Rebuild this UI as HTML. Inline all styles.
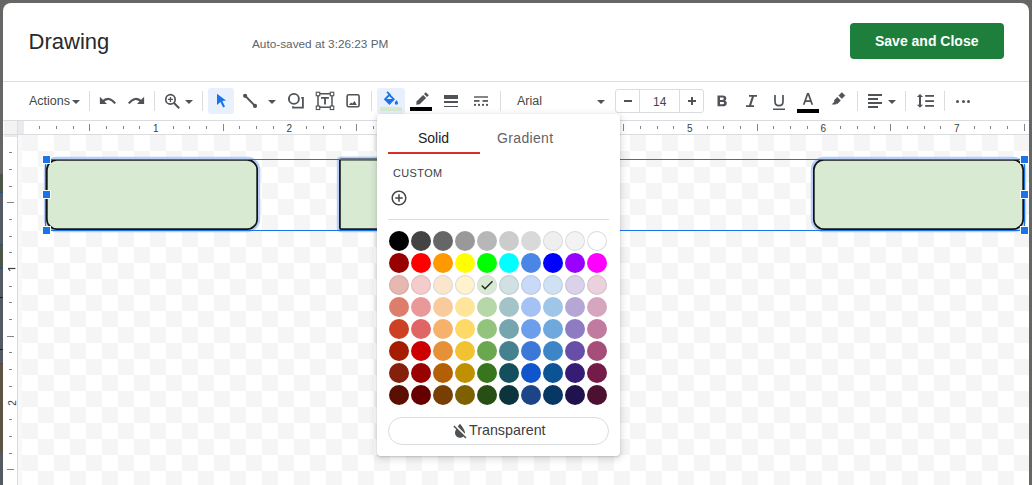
<!DOCTYPE html>
<html><head><meta charset="utf-8">
<style>
*{margin:0;padding:0;box-sizing:border-box}
html,body{width:1032px;height:485px;overflow:hidden;background:#666765;font-family:"Liberation Sans",sans-serif}
.a{position:absolute}
.t{position:absolute;white-space:nowrap;line-height:1}
.sep{position:absolute;top:91px;width:1px;height:20px;background:#dadce0}
svg{position:absolute;overflow:visible}
.ic{fill:#4f5256}
.tk{position:absolute;width:1px;background:#80868b}
.tkv{position:absolute;height:1px;background:#80868b}
.rn{font-size:10px;color:#3c4043}
.sw{position:absolute;width:20px;height:20px;border-radius:50%}
.dd{position:absolute;width:0;height:0;border-left:4px solid transparent;border-right:4px solid transparent;border-top:4px solid #4f5256}
.hd{position:absolute;width:9px;height:9px;background:#1a73e8;border:1px solid #fff}
</style></head><body>
<!-- dimmed background left strip -->
<div class="a" style="left:0;top:174px;width:3px;height:18px;background:#4d5546"></div>
<div class="a" style="left:0;top:192px;width:3px;height:1px;background:#2b4f7f"></div>
<div class="a" style="left:0;top:193px;width:3px;height:51px;background:#535a63"></div>
<div class="a" style="left:0;top:244px;width:3px;height:1px;background:#2b4f7f"></div>
<div class="a" style="left:0;top:245px;width:3px;height:23px;background:#4d5546"></div>
<div class="a" style="left:0;top:268px;width:3px;height:1px;background:#2b4f7f"></div>
<div class="a" style="left:0;top:269px;width:3px;height:28px;background:#535a63"></div>
<div class="a" style="left:0;top:297px;width:3px;height:1px;background:#222"></div>
<div class="a" style="left:0;top:298px;width:3px;height:51px;background:#535a63"></div>
<div class="a" style="left:0;top:349px;width:3px;height:1px;background:#222"></div>
<div class="a" style="left:0;top:350px;width:3px;height:13px;background:#535a63"></div>
<div class="a" style="left:0;top:363px;width:3px;height:1px;background:#2b4f7f"></div>
<div class="a" style="left:0;top:364px;width:3px;height:88px;background:#5e5444"></div>
<div class="a" style="left:0;top:452px;width:3px;height:33px;background:#555a62"></div>

<!-- dialog -->
<div class="a" style="left:3px;top:3px;width:1026px;height:490px;background:#fff;border-radius:8px 8px 0 0"></div>

<div class="t" style="left:28.6px;top:31px;font-size:22px;color:#28292c">Drawing</div>
<div class="t" style="left:252px;top:39px;font-size:11.8px;color:#5f6368">Auto-saved at 3:26:23 PM</div>
<div class="a" style="left:850px;top:23px;width:154px;height:36px;background:#1e7e3c;border-radius:4px"></div>
<div class="t" style="left:875px;top:34px;font-size:14px;font-weight:bold;color:#fff">Save and Close</div>

<!-- toolbar top border -->
<div class="a" style="left:3px;top:81px;width:1026px;height:1px;background:#dadce0"></div>

<!-- toolbar -->
<div class="t" style="left:29px;top:95px;font-size:12.5px;color:#444746">Actions</div>
<div class="dd" style="left:72px;top:100px"></div>
<div class="sep" style="left:89px"></div>
<!-- undo -->
<svg style="left:96px;top:92px" width="24" height="16" viewBox="96 92 24 16"><path class="ic" d="M99.9 96.8V104H107Z"/><path d="M102.3 101.8Q108.8 95.3 115.2 103.4" fill="none" stroke="#4f5256" stroke-width="2.1"/></svg>
<!-- redo -->
<svg style="left:124px;top:92px;transform:scaleX(-1)" width="24" height="16" viewBox="96 92 24 16"><path class="ic" d="M99.9 96.8V104H107Z"/><path d="M102.3 101.8Q108.8 95.3 115.2 103.4" fill="none" stroke="#4f5256" stroke-width="2.1"/></svg>
<div class="sep" style="left:154px"></div>
<!-- zoom -->
<svg style="left:160px;top:90px" width="24" height="22" viewBox="160 90 24 22"><circle cx="170.45" cy="99.4" r="4.7" fill="none" stroke="#4f5256" stroke-width="1.7"/><path d="M168 99.4H173M170.45 97V102" stroke="#4f5256" stroke-width="1.3"/><path d="M173.8 102.8L179.2 108.2" stroke="#4f5256" stroke-width="2"/></svg>
<div class="dd" style="left:185px;top:100px"></div>
<div class="sep" style="left:202px"></div>
<!-- select -->
<div class="a" style="left:208px;top:88px;width:26px;height:26px;background:#e8f0fe;border-radius:3px"></div>
<svg style="left:210px;top:90px" width="20" height="20" viewBox="210 90 20 20"><path fill="#1a73e8" d="M217 93.8L226 100.6L222.3 100.9L225 106.6L223.2 107.6L220.4 101.9L217 105Z"/></svg>
<!-- line -->
<svg style="left:240px;top:90px" width="20" height="20" viewBox="240 90 20 20"><path d="M245.1 95.8L255 105.9" stroke="#4f5256" stroke-width="2"/><circle cx="245.1" cy="95.8" r="2.1" fill="#4f5256"/><circle cx="255" cy="105.9" r="2.1" fill="#4f5256"/></svg>
<div class="dd" style="left:268px;top:100px"></div>
<!-- shape -->
<svg style="left:282px;top:88px" width="28" height="24" viewBox="282 88 28 24"><circle cx="293.9" cy="98.9" r="5" fill="none" stroke="#4f5256" stroke-width="1.9"/><path d="M301.3 97.9H302.9V107.6H293V106.3" fill="none" stroke="#4f5256" stroke-width="1.8"/></svg>
<!-- textbox -->
<svg style="left:312px;top:88px" width="26" height="26" viewBox="312 88 26 26"><path d="M318 93.7H332M318 107.2H332M318 93.7V107.2M332 93.7V107.2" fill="none" stroke="#4f5256" stroke-width="1.5"/><rect x="316.25" y="92.25" width="3.5" height="3.5" fill="#fff" stroke="#4f5256" stroke-width="1.1"/><rect x="330.25" y="92.25" width="3.5" height="3.5" fill="#fff" stroke="#4f5256" stroke-width="1.1"/><rect x="316.25" y="106.05" width="3.5" height="3.5" fill="#fff" stroke="#4f5256" stroke-width="1.1"/><rect x="330.25" y="106.05" width="3.5" height="3.5" fill="#fff" stroke="#4f5256" stroke-width="1.1"/><path d="M321 97H328.9V98.8H325.9V104.6H324.1V98.8H321Z" fill="#4f5256"/></svg>
<!-- image -->
<svg style="left:344px;top:92px" width="18" height="18" viewBox="344 92 18 18"><rect x="347.1" y="94.8" width="12" height="12" rx="1.6" fill="none" stroke="#4f5256" stroke-width="1.6"/><path d="M349 104.9L351 102.4L352.4 103.6L354.6 101L356.8 104.9Z" fill="#4f5256"/></svg>
<div class="sep" style="left:371px"></div>
<!-- fill -->
<div class="a" style="left:377px;top:88px;width:28px;height:26px;background:#e8f0fe;border-radius:3px"></div>
<svg style="left:380px;top:89px" width="22" height="18" viewBox="380 89 22 18"><path fill="#1a73e8" d="M383.8 99.2L389.4 93.6L395 99.2L389.4 104.9Z"/><path fill="#e8f0fe" d="M386.6 99L389.4 96.2L392.2 99Z"/><path d="M387 91.9L390.3 95.2" stroke="#1a73e8" stroke-width="1.7"/><path fill="#1a73e8" d="M396.4 100.3C396.4 100.3 394.7 102.3 394.7 103.1A1.7 1.7 0 0 0 398.1 103.1C398.1 102.3 396.4 100.3 396.4 100.3Z"/></svg>
<div class="a" style="left:380px;top:107px;width:22px;height:4px;background:#d9ead3"></div>
<!-- pen -->
<svg style="left:412px;top:89px" width="20" height="18" viewBox="412 89 20 18"><path fill="#4f5256" d="M416.2 104.8L416.7 101.3L423.1 94.9L426.1 97.9L419.7 104.3Z"/><path fill="#4f5256" d="M424 94L425.8 92.2L428.8 95.2L427 97Z"/></svg>
<div class="a" style="left:410px;top:107px;width:22px;height:4px;background:#000"></div>
<!-- line weight -->
<div class="a" style="left:444px;top:95px;width:14px;height:3.5px;background:#4f5256"></div>
<div class="a" style="left:444px;top:101px;width:14px;height:1.6px;background:#4f5256"></div>
<div class="a" style="left:444px;top:105.8px;width:14px;height:1px;background:#4f5256"></div>
<!-- dash -->
<svg style="left:474px;top:96px" width="14" height="10" viewBox="0 0 14 10"><rect x="0" y="0.3" width="14" height="1.4" fill="#4f5256"/><rect x="0" y="4.1" width="5.5" height="1.7" fill="#4f5256"/><rect x="8.5" y="4.1" width="5.5" height="1.7" fill="#4f5256"/><rect x="0" y="7.9" width="2" height="1.9" fill="#4f5256"/><rect x="4" y="7.9" width="2" height="1.9" fill="#4f5256"/><rect x="8" y="7.9" width="2" height="1.9" fill="#4f5256"/><rect x="12" y="7.9" width="2" height="1.9" fill="#4f5256"/></svg>
<div class="sep" style="left:500px"></div>
<!-- font -->
<div class="t" style="left:517px;top:95px;font-size:12.5px;color:#444746">Arial</div>
<div class="dd" style="left:597px;top:100px"></div>
<!-- size box -->
<div class="a" style="left:615px;top:89px;width:89px;height:24px;border:1px solid #dadce0;border-radius:3px"></div>
<div class="a" style="left:639px;top:89px;width:1px;height:24px;background:#dadce0"></div>
<div class="a" style="left:679px;top:89px;width:1px;height:24px;background:#dadce0"></div>
<div class="a" style="left:624px;top:100px;width:8px;height:2px;background:#4f5256"></div>
<div class="t" style="left:653px;top:96px;font-size:12px;color:#444746">14</div>
<div class="a" style="left:688px;top:100px;width:8px;height:2px;background:#4f5256"></div>
<div class="a" style="left:691px;top:97px;width:2px;height:8px;background:#4f5256"></div>
<!-- B I U -->
<svg style="left:716px;top:94px" width="13" height="13" viewBox="0 0 13 13"><path fill="#4f5256" d="M1.5 1.5H6.5C9 1.5 10.3 2.8 10.3 4.5C10.3 5.5 9.8 6.2 9 6.6C10 7 10.8 7.9 10.8 9.2C10.8 11.1 9.4 12.3 6.8 12.3H1.5ZM4 3.6V6H6.3C7.3 6 7.8 5.5 7.8 4.8C7.8 4 7.3 3.6 6.3 3.6ZM4 8V10.2H6.6C7.7 10.2 8.2 9.7 8.2 9.1C8.2 8.4 7.7 8 6.6 8Z"/></svg>
<svg style="left:745px;top:95px" width="12" height="12" viewBox="0 0 12 12"><path fill="#4f5256" d="M4 0H12V1.8H9L6.2 10.2H9V12H1V10.2H4L6.8 1.8H4Z"/></svg>
<svg style="left:773px;top:95px" width="12" height="15" viewBox="0 0 12 15"><path d="M2 0V6.5C2 9 3.6 10.6 6 10.6S10 9 10 6.5V0" fill="none" stroke="#4f5256" stroke-width="1.7"/><rect x="0" y="13.5" width="12" height="1.5" fill="#4f5256"/></svg>
<!-- text color -->
<svg style="left:802px;top:93px" width="12" height="12" viewBox="0 0 12 12"><path fill="#4f5256" d="M5 0H7L11.2 11.8H9.4L8.4 9H3.6L2.6 11.8H0.8ZM4.2 7.3H7.8L6 2.2Z"/></svg>
<div class="a" style="left:797px;top:109px;width:22px;height:4px;background:#000"></div>
<!-- highlighter -->
<svg style="left:828px;top:89px" width="20" height="18" viewBox="828 89 20 18"><path fill="#4f5256" stroke="#4f5256" stroke-width="0.6" stroke-linejoin="round" d="M841.9 92.6L844.9 95.6L841.9 98.6L838.9 95.6Z"/><path fill="#4f5256" d="M837.3 97.1L840.8 100.6L837.4 104L836.6 103.6L835.6 104.6L831.6 104.6L834.4 101.8L833.9 100.5Z"/></svg>
<div class="sep" style="left:857px"></div>
<!-- align -->
<div class="a" style="left:868px;top:94px;width:14px;height:2px;background:#4f5256"></div>
<div class="a" style="left:868px;top:98px;width:10px;height:2px;background:#4f5256"></div>
<div class="a" style="left:868px;top:102px;width:14px;height:2px;background:#4f5256"></div>
<div class="a" style="left:868px;top:106px;width:10px;height:2px;background:#4f5256"></div>
<div class="dd" style="left:888px;top:100px"></div>
<div class="sep" style="left:905px"></div>
<!-- line spacing -->
<svg style="left:914px;top:90px" width="24" height="20" viewBox="914 90 24 20"><path fill="#4f5256" d="M920 93.9L923.1 97H921V104.8H923.1L920 107.8L916.9 104.8H919V97H916.9Z"/><rect x="925.2" y="95" width="8.8" height="1.8" fill="#4f5256"/><rect x="925.2" y="100.2" width="8.8" height="1.8" fill="#4f5256"/><rect x="925.2" y="105" width="8.8" height="1.8" fill="#4f5256"/></svg>
<div class="sep" style="left:944px"></div>
<!-- more -->
<div class="a" style="left:956px;top:99.5px;width:3px;height:3px;border-radius:50%;background:#4f5256"></div>
<div class="a" style="left:961.5px;top:99.5px;width:3px;height:3px;border-radius:50%;background:#4f5256"></div>
<div class="a" style="left:967px;top:99.5px;width:3px;height:3px;border-radius:50%;background:#4f5256"></div>

<!-- ruler -->
<div class="a" style="left:3px;top:120px;width:1026px;height:1px;background:#dadce0"></div>
<div class="a" style="left:3px;top:134px;width:1026px;height:1px;background:#dadce0"></div>
<div class="a" style="left:4px;top:121px;width:13px;height:13px;background:#f3f3f3"></div>
<div class="a" style="left:17px;top:121px;width:1px;height:364px;background:#dadce0"></div>
<div class="a" style="left:18px;top:121px;width:6px;height:13px;background:#e8eaed"></div>
<div class="a" style="left:4px;top:135px;width:13px;height:2px;background:#e8eaed"></div>

<!-- canvas checkerboard -->
<div class="a" style="left:18px;top:135px;width:4px;height:350px;background:#f8f8f8"></div>
<div class="a" style="left:22px;top:135px;width:1007px;height:350px;background:conic-gradient(#f5f5f5 25%,#fff 0 50%,#f5f5f5 0 75%,#fff 0) 16px 0/32px 32px"></div>

<div class="a tk" style="left:39px;top:126px;height:3px"></div>
<div class="a tk" style="left:56px;top:126px;height:3px"></div>
<div class="a tk" style="left:73px;top:126px;height:3px"></div>
<div class="a tk" style="left:89px;top:124px;height:7px"></div>
<div class="a tk" style="left:106px;top:126px;height:3px"></div>
<div class="a tk" style="left:123px;top:126px;height:3px"></div>
<div class="a tk" style="left:139px;top:126px;height:3px"></div>
<div class="t rn" style="left:153.0px;top:124px">1</div>
<div class="a tk" style="left:173px;top:126px;height:3px"></div>
<div class="a tk" style="left:189px;top:126px;height:3px"></div>
<div class="a tk" style="left:206px;top:126px;height:3px"></div>
<div class="a tk" style="left:223px;top:124px;height:7px"></div>
<div class="a tk" style="left:239px;top:126px;height:3px"></div>
<div class="a tk" style="left:256px;top:126px;height:3px"></div>
<div class="a tk" style="left:273px;top:126px;height:3px"></div>
<div class="t rn" style="left:286.5px;top:124px">2</div>
<div class="a tk" style="left:306px;top:126px;height:3px"></div>
<div class="a tk" style="left:323px;top:126px;height:3px"></div>
<div class="a tk" style="left:340px;top:126px;height:3px"></div>
<div class="a tk" style="left:356px;top:124px;height:7px"></div>
<div class="a tk" style="left:373px;top:126px;height:3px"></div>
<div class="a tk" style="left:390px;top:126px;height:3px"></div>
<div class="a tk" style="left:406px;top:126px;height:3px"></div>
<div class="t rn" style="left:420.0px;top:124px">3</div>
<div class="a tk" style="left:440px;top:126px;height:3px"></div>
<div class="a tk" style="left:456px;top:126px;height:3px"></div>
<div class="a tk" style="left:473px;top:126px;height:3px"></div>
<div class="a tk" style="left:490px;top:124px;height:7px"></div>
<div class="a tk" style="left:506px;top:126px;height:3px"></div>
<div class="a tk" style="left:523px;top:126px;height:3px"></div>
<div class="a tk" style="left:540px;top:126px;height:3px"></div>
<div class="t rn" style="left:553.5px;top:124px">4</div>
<div class="a tk" style="left:573px;top:126px;height:3px"></div>
<div class="a tk" style="left:590px;top:126px;height:3px"></div>
<div class="a tk" style="left:607px;top:126px;height:3px"></div>
<div class="a tk" style="left:623px;top:124px;height:7px"></div>
<div class="a tk" style="left:640px;top:126px;height:3px"></div>
<div class="a tk" style="left:657px;top:126px;height:3px"></div>
<div class="a tk" style="left:673px;top:126px;height:3px"></div>
<div class="t rn" style="left:687.0px;top:124px">5</div>
<div class="a tk" style="left:707px;top:126px;height:3px"></div>
<div class="a tk" style="left:723px;top:126px;height:3px"></div>
<div class="a tk" style="left:740px;top:126px;height:3px"></div>
<div class="a tk" style="left:757px;top:124px;height:7px"></div>
<div class="a tk" style="left:773px;top:126px;height:3px"></div>
<div class="a tk" style="left:790px;top:126px;height:3px"></div>
<div class="a tk" style="left:807px;top:126px;height:3px"></div>
<div class="t rn" style="left:820.5px;top:124px">6</div>
<div class="a tk" style="left:840px;top:126px;height:3px"></div>
<div class="a tk" style="left:857px;top:126px;height:3px"></div>
<div class="a tk" style="left:874px;top:126px;height:3px"></div>
<div class="a tk" style="left:890px;top:124px;height:7px"></div>
<div class="a tk" style="left:907px;top:126px;height:3px"></div>
<div class="a tk" style="left:924px;top:126px;height:3px"></div>
<div class="a tk" style="left:940px;top:126px;height:3px"></div>
<div class="t rn" style="left:954.0px;top:124px">7</div>
<div class="a tk" style="left:974px;top:126px;height:3px"></div>
<div class="a tk" style="left:990px;top:126px;height:3px"></div>
<div class="a tk" style="left:1007px;top:126px;height:3px"></div>
<div class="a tk" style="left:1024px;top:124px;height:7px"></div>
<div class="a tkv" style="left:9px;top:152px;width:3px"></div>
<div class="a tkv" style="left:9px;top:169px;width:3px"></div>
<div class="a tkv" style="left:9px;top:186px;width:3px"></div>
<div class="a tkv" style="left:7px;top:202px;width:7px"></div>
<div class="a tkv" style="left:9px;top:219px;width:3px"></div>
<div class="a tkv" style="left:9px;top:236px;width:3px"></div>
<div class="a tkv" style="left:9px;top:252px;width:3px"></div>
<svg style="left:6px;top:264px" width="12" height="10" viewBox="6 264 12 10"><path d="M8 268.5H15.4" stroke="#3c4043" stroke-width="1.2"/><path d="M8.3 268.5L10.2 271" stroke="#3c4043" stroke-width="1.1"/></svg>
<div class="a tkv" style="left:9px;top:286px;width:3px"></div>
<div class="a tkv" style="left:9px;top:302px;width:3px"></div>
<div class="a tkv" style="left:9px;top:319px;width:3px"></div>
<div class="a tkv" style="left:7px;top:336px;width:7px"></div>
<div class="a tkv" style="left:9px;top:352px;width:3px"></div>
<div class="a tkv" style="left:9px;top:369px;width:3px"></div>
<div class="a tkv" style="left:9px;top:386px;width:3px"></div>
<div class="t rn" style="left:9.5px;top:397.5px;transform:rotate(-90deg)">2</div>
<div class="a tkv" style="left:9px;top:419px;width:3px"></div>
<div class="a tkv" style="left:9px;top:436px;width:3px"></div>
<div class="a tkv" style="left:9px;top:453px;width:3px"></div>
<div class="a tkv" style="left:7px;top:469px;width:7px"></div>

<!-- shapes -->
<svg style="left:0;top:0" width="1032" height="485" viewBox="0 0 1032 485"><rect x="46.85" y="159.85" width="210.30" height="69.30" rx="10" fill="none" stroke="#b5cff9" stroke-width="6.10"/><rect x="339.90" y="159.50" width="210.20" height="69.60" rx="1" fill="none" stroke="#b5cff9" stroke-width="6.20"/><rect x="813.85" y="159.85" width="209.30" height="69.30" rx="10" fill="none" stroke="#b5cff9" stroke-width="6.10"/><rect x="46.85" y="159.85" width="210.30" height="69.30" rx="10" fill="#d9ead3" stroke="#141414" stroke-width="1.7"/><rect x="339.90" y="159.50" width="210.20" height="69.60" rx="1" fill="#d9ead3" stroke="#1c1c1c" stroke-width="1.8"/><rect x="813.85" y="159.85" width="209.30" height="69.30" rx="10" fill="#d9ead3" stroke="#141414" stroke-width="1.7"/><rect x="45.5" y="159.5" width="979" height="71" fill="none" stroke="#1a73e8" stroke-width="1"/></svg>
<div class="hd" style="left:42px;top:155px"></div>
<div class="hd" style="left:42px;top:190px"></div>
<div class="hd" style="left:42px;top:226px"></div>
<div class="hd" style="left:1020px;top:155px"></div>
<div class="hd" style="left:1020px;top:190px"></div>
<div class="hd" style="left:1020px;top:226px"></div>

<!-- popup -->
<div class="a" style="left:377px;top:114px;width:243px;height:341.5px;background:#fff;border-radius:4px;box-shadow:0 1px 2px 0 rgba(60,64,67,.22),0 2px 6px 2px rgba(60,64,67,.14)"></div>
<div class="t" style="left:418px;top:131px;font-size:14px;color:#202124">Solid</div>
<div class="t" style="left:497px;top:131px;font-size:14px;color:#5f6368;letter-spacing:0.35px">Gradient</div>
<div class="a" style="left:388px;top:152px;width:92px;height:2px;background:#d93025"></div>
<div class="t" style="left:393px;top:167.7px;font-size:10.9px;color:#3c4043;letter-spacing:0.42px">CUSTOM</div>
<svg style="left:390px;top:189px" width="18" height="18" viewBox="0 0 24 24"><path fill="#444746" d="M13 7h-2v4H7v2h4v4h2v-4h4v-2h-4V7zm-1-5C6.48 2 2 6.48 2 12s4.48 10 10 10 10-4.48 10-10S17.52 2 12 2zm0 18c-4.41 0-8-3.59-8-8s3.59-8 8-8 8 3.59 8 8-3.590 8-8 8z"/></svg>
<div class="a" style="left:388px;top:219px;width:221px;height:1px;background:#dadce0"></div>
<div class="sw" style="left:389px;top:230.5px;background:#000000"></div>
<div class="sw" style="left:411px;top:230.5px;background:#434343"></div>
<div class="sw" style="left:433px;top:230.5px;background:#666666"></div>
<div class="sw" style="left:455px;top:230.5px;background:#999999"></div>
<div class="sw" style="left:477px;top:230.5px;background:#b7b7b7"></div>
<div class="sw" style="left:499px;top:230.5px;background:#cccccc"></div>
<div class="sw" style="left:521px;top:230.5px;background:#d9d9d9"></div>
<div class="sw" style="left:543px;top:230.5px;background:#efefef;box-shadow:inset 0 0 0 1px #dadce0"></div>
<div class="sw" style="left:565px;top:230.5px;background:#f3f3f3;box-shadow:inset 0 0 0 1px #dadce0"></div>
<div class="sw" style="left:587px;top:230.5px;background:#ffffff;box-shadow:inset 0 0 0 1px #dadce0"></div>
<div class="sw" style="left:389px;top:252.5px;background:#980000"></div>
<div class="sw" style="left:411px;top:252.5px;background:#ff0000"></div>
<div class="sw" style="left:433px;top:252.5px;background:#ff9900"></div>
<div class="sw" style="left:455px;top:252.5px;background:#ffff00"></div>
<div class="sw" style="left:477px;top:252.5px;background:#00ff00"></div>
<div class="sw" style="left:499px;top:252.5px;background:#00ffff"></div>
<div class="sw" style="left:521px;top:252.5px;background:#4a86e8"></div>
<div class="sw" style="left:543px;top:252.5px;background:#0000ff"></div>
<div class="sw" style="left:565px;top:252.5px;background:#9900ff"></div>
<div class="sw" style="left:587px;top:252.5px;background:#ff00ff"></div>
<div class="sw" style="left:389px;top:274.5px;background:#e6b8af;box-shadow:inset 0 0 0 1px rgba(60,64,67,.12)"></div>
<div class="sw" style="left:411px;top:274.5px;background:#f4cccc;box-shadow:inset 0 0 0 1px rgba(60,64,67,.12)"></div>
<div class="sw" style="left:433px;top:274.5px;background:#fce5cd;box-shadow:inset 0 0 0 1px #dadce0"></div>
<div class="sw" style="left:455px;top:274.5px;background:#fff2cc;box-shadow:inset 0 0 0 1px #dadce0"></div>
<div class="sw" style="left:477px;top:274.5px;background:#d9ead3;box-shadow:inset 0 0 0 1px #dadce0"></div>
<div class="sw" style="left:499px;top:274.5px;background:#d0e0e3;box-shadow:inset 0 0 0 1px rgba(60,64,67,.12)"></div>
<div class="sw" style="left:521px;top:274.5px;background:#c9daf8;box-shadow:inset 0 0 0 1px rgba(60,64,67,.12)"></div>
<div class="sw" style="left:543px;top:274.5px;background:#cfe2f3;box-shadow:inset 0 0 0 1px rgba(60,64,67,.12)"></div>
<div class="sw" style="left:565px;top:274.5px;background:#d9d2e9;box-shadow:inset 0 0 0 1px rgba(60,64,67,.12)"></div>
<div class="sw" style="left:587px;top:274.5px;background:#ead1dc;box-shadow:inset 0 0 0 1px rgba(60,64,67,.12)"></div>
<div class="sw" style="left:389px;top:296.5px;background:#dd7e6b"></div>
<div class="sw" style="left:411px;top:296.5px;background:#ea9999"></div>
<div class="sw" style="left:433px;top:296.5px;background:#f9cb9c"></div>
<div class="sw" style="left:455px;top:296.5px;background:#ffe599"></div>
<div class="sw" style="left:477px;top:296.5px;background:#b6d7a8"></div>
<div class="sw" style="left:499px;top:296.5px;background:#a2c4c9"></div>
<div class="sw" style="left:521px;top:296.5px;background:#a4c2f4"></div>
<div class="sw" style="left:543px;top:296.5px;background:#9fc5e8"></div>
<div class="sw" style="left:565px;top:296.5px;background:#b4a7d6"></div>
<div class="sw" style="left:587px;top:296.5px;background:#d5a6bd"></div>
<div class="sw" style="left:389px;top:318.5px;background:#cc4125"></div>
<div class="sw" style="left:411px;top:318.5px;background:#e06666"></div>
<div class="sw" style="left:433px;top:318.5px;background:#f6b26b"></div>
<div class="sw" style="left:455px;top:318.5px;background:#ffd966"></div>
<div class="sw" style="left:477px;top:318.5px;background:#93c47d"></div>
<div class="sw" style="left:499px;top:318.5px;background:#76a5af"></div>
<div class="sw" style="left:521px;top:318.5px;background:#6d9eeb"></div>
<div class="sw" style="left:543px;top:318.5px;background:#6fa8dc"></div>
<div class="sw" style="left:565px;top:318.5px;background:#8e7cc3"></div>
<div class="sw" style="left:587px;top:318.5px;background:#c27ba0"></div>
<div class="sw" style="left:389px;top:340.5px;background:#a61c00"></div>
<div class="sw" style="left:411px;top:340.5px;background:#cc0000"></div>
<div class="sw" style="left:433px;top:340.5px;background:#e69138"></div>
<div class="sw" style="left:455px;top:340.5px;background:#f1c232"></div>
<div class="sw" style="left:477px;top:340.5px;background:#6aa84f"></div>
<div class="sw" style="left:499px;top:340.5px;background:#45818e"></div>
<div class="sw" style="left:521px;top:340.5px;background:#3c78d8"></div>
<div class="sw" style="left:543px;top:340.5px;background:#3d85c6"></div>
<div class="sw" style="left:565px;top:340.5px;background:#674ea7"></div>
<div class="sw" style="left:587px;top:340.5px;background:#a64d79"></div>
<div class="sw" style="left:389px;top:362.5px;background:#85200c"></div>
<div class="sw" style="left:411px;top:362.5px;background:#990000"></div>
<div class="sw" style="left:433px;top:362.5px;background:#b45f06"></div>
<div class="sw" style="left:455px;top:362.5px;background:#bf9000"></div>
<div class="sw" style="left:477px;top:362.5px;background:#38761d"></div>
<div class="sw" style="left:499px;top:362.5px;background:#134f5c"></div>
<div class="sw" style="left:521px;top:362.5px;background:#1155cc"></div>
<div class="sw" style="left:543px;top:362.5px;background:#0b5394"></div>
<div class="sw" style="left:565px;top:362.5px;background:#351c75"></div>
<div class="sw" style="left:587px;top:362.5px;background:#741b47"></div>
<div class="sw" style="left:389px;top:384.5px;background:#5b0f00"></div>
<div class="sw" style="left:411px;top:384.5px;background:#660000"></div>
<div class="sw" style="left:433px;top:384.5px;background:#783f04"></div>
<div class="sw" style="left:455px;top:384.5px;background:#7f6000"></div>
<div class="sw" style="left:477px;top:384.5px;background:#274e13"></div>
<div class="sw" style="left:499px;top:384.5px;background:#0c343d"></div>
<div class="sw" style="left:521px;top:384.5px;background:#1c4587"></div>
<div class="sw" style="left:543px;top:384.5px;background:#073763"></div>
<div class="sw" style="left:565px;top:384.5px;background:#20124d"></div>
<div class="sw" style="left:587px;top:384.5px;background:#4c1130"></div>
<svg style="left:478.7px;top:277px" width="16" height="16" viewBox="0 0 24 24"><path fill="#202124" d="M9 16.17L4.83 12l-1.42 1.41L9 19 21 7l-1.41-1.41z"/></svg>
<div class="a" style="left:388px;top:417px;width:221px;height:28px;border:1px solid #dadce0;border-radius:14px"></div>
<svg style="left:450px;top:420.5px" width="20" height="20" viewBox="0 0 24 24"><path fill="#4f5256" d="M18 14c0-4-6-10.8-6-10.8s-1.33 1.51-2.73 3.52l8.59 8.59c.09-.42.14-.86.14-1.31zm-.88 3.12L12.5 12.5 5.27 5.27 4 6.55l3.32 3.32C6.55 11.32 6 12.79 6 14c0 3.31 2.69 6 6 6 1.52 0 2.9-.57 3.96-1.5l2.63 2.63 1.27-1.27-2.74-2.74z"/></svg>
<div class="t" style="left:469px;top:423px;font-size:14.3px;color:#3c4043">Transparent</div>
</body></html>
